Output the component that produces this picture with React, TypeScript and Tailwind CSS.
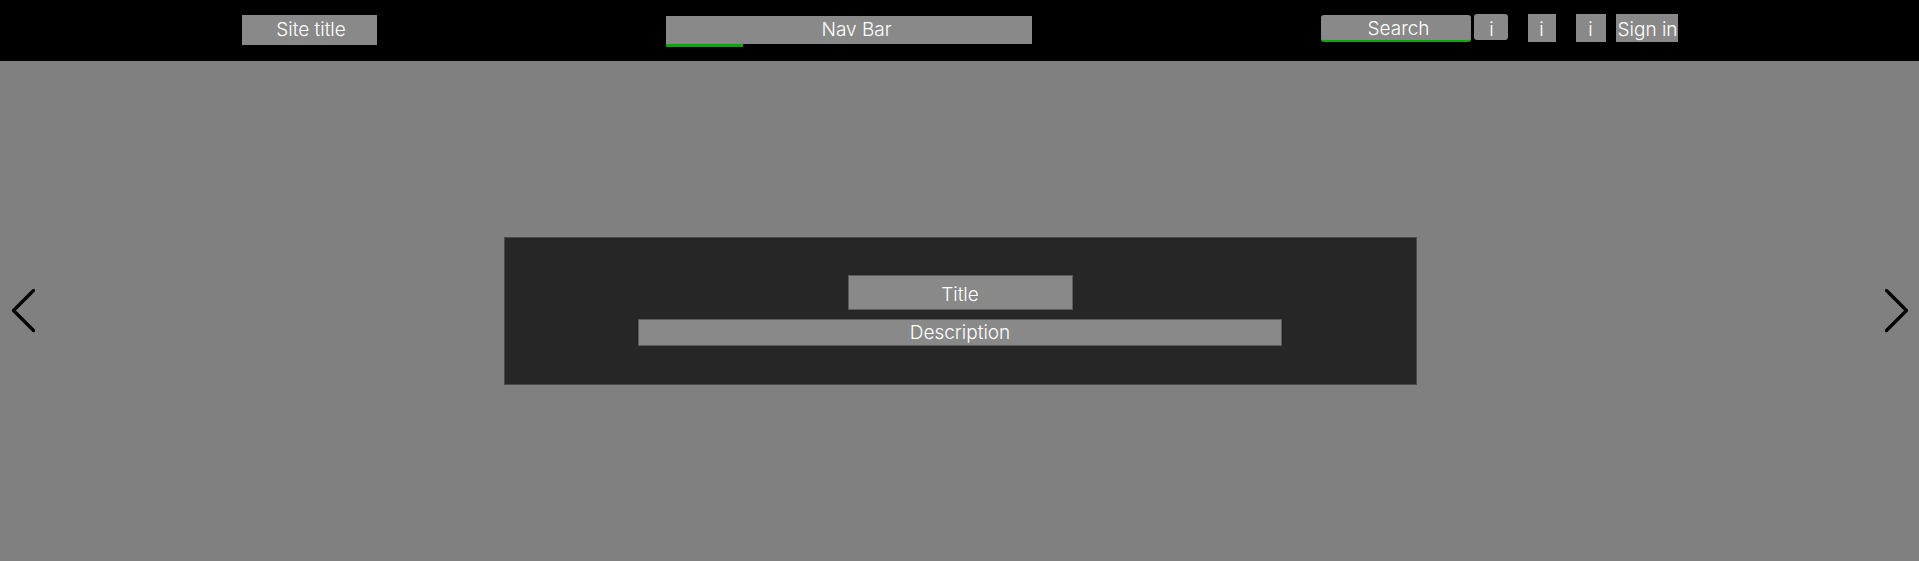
import type { ReactNode } from "react";

const box = "bg-[#898989]";

function IconButton({ label, className, children }: { label: string; className: string; children: ReactNode }) {
  return (
    <button type="button" aria-label={label} className={`${box} pt-1 text-center leading-6 ${className}`}>
      {children}
    </button>
  );
}

function Header() {
  return (
    <header className="bg-black py-3.5">
      <div className="mx-auto flex w-full max-w-[1436px] items-start justify-between">
        <a href="#" className={`${box} mt-px w-[135px] pl-1 text-center leading-[30px]`}>
          Site title
        </a>
        <nav className="mt-0.5 w-[366px]">
          <a href="#" className={`${box} block pl-4 text-center leading-7`}>
            Nav Bar
          </a>
          <div className="h-[3px] w-[77px] bg-[#00ab00]" />
        </nav>
        <div className="flex items-start">
          <input
            type="text"
            aria-label="Search"
            placeholder="Search"
            className={`${box} mt-px mr-[3px] h-[27px] w-[150px] rounded-[3px] border-b-2 border-[#0ea80e] pt-1 pl-1.5 text-center placeholder:text-white placeholder:opacity-100 focus:outline-none`}
          />
          <IconButton label="Search info" className="mr-5 h-[26px] w-[34px] rounded-[3px] pl-0.5">
            i
          </IconButton>
          <IconButton label="Notifications" className="mr-5 w-7">
            i
          </IconButton>
          <IconButton label="Help" className="mr-2.5 w-[30px]">
            i
          </IconButton>
          <button type="button" className={`${box} w-[62px] pt-1 pl-0.5 text-center leading-6 whitespace-nowrap`}>
            Sign in
          </button>
        </div>
      </div>
    </header>
  );
}

function Arrow({ label, points }: { label: string; points: string }) {
  return (
    <button type="button" aria-label={label} className="shrink-0">
      <svg
        width="24"
        height="44"
        viewBox="0 0 24 44"
        fill="none"
        stroke="black"
        strokeWidth="3.2"
        strokeLinecap="round"
        strokeLinejoin="round"
      >
        <polyline points={points} />
      </svg>
    </button>
  );
}

export default function App() {
  return (
    <div className="flex min-h-screen flex-col bg-[#808080] font-['Inter',sans-serif] text-[19px] font-light text-white">
      <Header />
      <main className="flex flex-1 items-center justify-between pr-2.5 pl-[11px]">
        <Arrow label="Previous slide" points="22.5,1.5 2.5,21.5 22.5,41.5" />
        <section className="flex w-[913px] flex-col items-center gap-[9px] border border-[#4a4a4a] bg-[#262626] px-4 pt-[37px] pb-[38px]">
          <h1 className={`${box} w-[225px] border border-[#5c5c5c] pt-1 text-center leading-[29px]`}>Title</h1>
          <p className={`${box} w-[644px] border border-[#5c5c5c] text-center leading-[25px]`}>Description</p>
        </section>
        <Arrow label="Next slide" points="1.5,1.5 21.5,21.5 1.5,41.5" />
      </main>
    </div>
  );
}
